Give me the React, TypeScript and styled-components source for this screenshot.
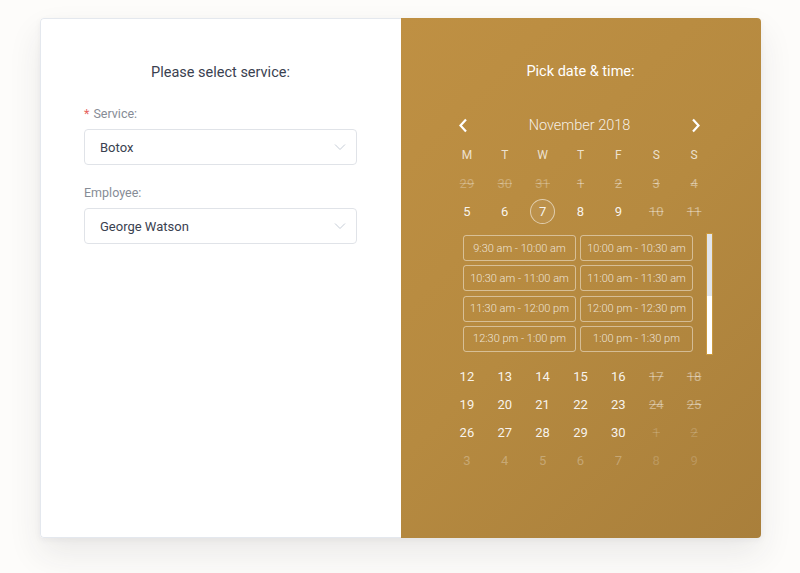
import React from 'react';
import styled, { createGlobalStyle, css } from 'styled-components';

const GlobalStyle = createGlobalStyle`
    html, body {
        margin: 0;
        padding: 0;
        background: #fdfcfa;
        font-family: Roboto, "Open Sans", Arial, sans-serif;
        -webkit-font-smoothing: antialiased;
    }
`;

const Page = styled.div`
    padding: 18px 0 0 40px;
    height: 573px;
    box-sizing: border-box;
`;

const Card = styled.div`
    display: flex;
    width: 721px;
    height: 520px;
    border-radius: 4px;
    overflow: hidden;
    box-shadow: 0 16px 34px rgba(40, 40, 60, 0.09), 0 2px 6px rgba(40, 40, 60, 0.05);
`;

const LeftPanel = styled.div`
    width: 361px;
    box-sizing: border-box;
    padding: 44px 44px 0 43px;
    background: #fff;
    border: 1px solid #e4e8ee;
    border-right: none;
    border-radius: 4px 0 0 4px;
`;

const RightPanel = styled.div`
    flex: 1;
    box-sizing: border-box;
    padding: 44px 48px 0 47px;
    background: linear-gradient(135deg, #bf9043 0%, #b68a40 50%, #a97f3b 100%);
    display: flex;
    flex-direction: column;
`;

const Title = styled.h2<{ light?: boolean }>`
    margin: 0;
    font-size: 14.5px;
    line-height: 20px;
    font-weight: 400;
    text-align: center;
    color: ${({ light }) => (light ? '#fff' : '#3a4150')};
`;

const Field = styled.div`
    margin-top: 23px;
    & + & {
        margin-top: 20px;
    }
`;

const Label = styled.div`
    font-size: 12.5px;
    line-height: 16px;
    color: #868c96;
    margin-bottom: 7px;
`;

const Required = styled.span`
    color: #e6625e;
    margin-right: 4px;
`;

const Select = styled.div`
    height: 36px;
    box-sizing: border-box;
    border: 1px solid #e0e3e8;
    border-radius: 4px;
    display: flex;
    align-items: center;
    justify-content: space-between;
    padding: 0 10px 0 15px;
    font-size: 13px;
    color: #3a4150;
`;

const Chevron = () => (
    <svg width="12" height="8" viewBox="0 0 12 8" fill="none">
        <path d="M1 1.5l5 5 5-5" stroke="#c5ccd6" strokeWidth="1" />
    </svg>
);

const Nav = styled.div`
    margin-top: 29px;
    margin-bottom: 2px;
    height: 28px;
    display: flex;
    align-items: center;
    justify-content: space-between;
    padding: 0 12px 0 10px;
    color: rgba(255, 255, 255, 0.88);
    font-size: 14.5px;
    font-weight: 300;
`;

const Arrow = ({ dir }: { dir: 'left' | 'right' }) => (
    <svg width="10" height="15" viewBox="0 0 10 15" fill="none">
        <path
            d={dir === 'left' ? 'M8 1.5L2.5 7.5 8 13.5' : 'M2 1.5l5.5 6-5.5 6'}
            stroke="#fff"
            strokeWidth="2.2"
        />
    </svg>
);

const Week = styled.div`
    display: grid;
    grid-template-columns: repeat(7, 1fr);
`;

const Cell = styled.div<{ head?: boolean; tone?: number; struck?: boolean }>`
    height: 28px;
    display: flex;
    align-items: center;
    justify-content: center;
    font-size: ${({ head }) => (head ? '12px' : '13px')};
    color: ${({ tone = 0.92 }) => `rgba(255, 255, 255, ${tone})`};
    ${({ struck }) =>
        struck &&
        css`
            text-decoration: line-through;
        `}
`;

const Today = styled.span`
    width: 25px;
    height: 25px;
    box-sizing: border-box;
    border-radius: 50%;
    border: 1px solid rgba(255, 255, 255, 0.55);
    background: rgba(255, 255, 255, 0.06);
    display: flex;
    align-items: center;
    justify-content: center;
`;

const SlotArea = styled.div`
    margin: 8px 0 7px 15px;
    height: 122px;
    display: flex;
    gap: 13px;
`;

const SlotGrid = styled.div`
    padding-top: 2px;
    display: grid;
    grid-template-columns: 113px 113px;
    grid-auto-rows: 26px;
    column-gap: 4px;
    row-gap: 4.3px;
`;

const Slot = styled.div`
    box-sizing: border-box;
    border: 1px solid rgba(255, 255, 255, 0.45);
    border-radius: 3px;
    display: flex;
    align-items: center;
    justify-content: center;
    font-size: 11px;
    font-weight: 300;
    color: rgba(255, 255, 255, 0.78);
    white-space: nowrap;
`;

const Scrollbar = styled.div`
    width: 7px;
    height: 122px;
    box-sizing: border-box;
    border: 1px solid #c9993f;
    background: #fff;
    display: flex;
    flex-direction: column;
`;

const Thumb = styled.div`
    height: 62px;
    background: #e1e5ec;
`;

type Day = { n: number | string; tone?: number; struck?: boolean; today?: boolean };

const heads = ['M', 'T', 'W', 'T', 'F', 'S', 'S'];

const topRows: Day[][] = [
    [
        { n: 29, tone: 0.28, struck: true },
        { n: 30, tone: 0.28, struck: true },
        { n: 31, tone: 0.28, struck: true },
        { n: 1, tone: 0.42, struck: true },
        { n: 2, tone: 0.42, struck: true },
        { n: 3, tone: 0.42, struck: true },
        { n: 4, tone: 0.42, struck: true },
    ],
    [
        { n: 5 },
        { n: 6 },
        { n: 7, today: true },
        { n: 8 },
        { n: 9 },
        { n: 10, tone: 0.42, struck: true },
        { n: 11, tone: 0.42, struck: true },
    ],
];

const bottomRows: Day[][] = [
    [
        { n: 12 },
        { n: 13 },
        { n: 14 },
        { n: 15 },
        { n: 16 },
        { n: 17, tone: 0.42, struck: true },
        { n: 18, tone: 0.42, struck: true },
    ],
    [
        { n: 19 },
        { n: 20 },
        { n: 21 },
        { n: 22 },
        { n: 23 },
        { n: 24, tone: 0.42, struck: true },
        { n: 25, tone: 0.42, struck: true },
    ],
    [
        { n: 26 },
        { n: 27 },
        { n: 28 },
        { n: 29 },
        { n: 30 },
        { n: 1, tone: 0.18, struck: true },
        { n: 2, tone: 0.18, struck: true },
    ],
    [
        { n: 3, tone: 0.28 },
        { n: 4, tone: 0.28 },
        { n: 5, tone: 0.28 },
        { n: 6, tone: 0.28 },
        { n: 7, tone: 0.28 },
        { n: 8, tone: 0.18 },
        { n: 9, tone: 0.18 },
    ],
];

const slots = [
    '9:30 am - 10:00 am',
    '10:00 am - 10:30 am',
    '10:30 am - 11:00 am',
    '11:00 am - 11:30 am',
    '11:30 am - 12:00 pm',
    '12:00 pm - 12:30 pm',
    '12:30 pm - 1:00 pm',
    '1:00 pm - 1:30 pm',
];

const renderRows = (rows: Day[][]) =>
    rows.map((row, i) => (
        <Week key={i}>
            {row.map((d, j) => (
                <Cell key={j} tone={d.tone} struck={d.struck}>
                    {d.today ? <Today>{d.n}</Today> : d.n}
                </Cell>
            ))}
        </Week>
    ));

const App: React.FunctionComponent = () => (
    <Page>
        <GlobalStyle />
        <Card>
            <LeftPanel>
                <Title>Please select service:</Title>
                <Field>
                    <Label>
                        <Required>*</Required>Service:
                    </Label>
                    <Select>
                        Botox
                        <Chevron />
                    </Select>
                </Field>
                <Field>
                    <Label>Employee:</Label>
                    <Select>
                        George Watson
                        <Chevron />
                    </Select>
                </Field>
            </LeftPanel>
            <RightPanel>
                <Title light>Pick date &amp; time:</Title>
                <Nav>
                    <Arrow dir="left" />
                    November 2018
                    <Arrow dir="right" />
                </Nav>
                <Week>
                    {heads.map((h, i) => (
                        <Cell key={i} head tone={0.75}>
                            {h}
                        </Cell>
                    ))}
                </Week>
                {renderRows(topRows)}
                <SlotArea>
                    <SlotGrid>
                        {slots.map((s) => (
                            <Slot key={s}>{s}</Slot>
                        ))}
                    </SlotGrid>
                    <Scrollbar>
                        <Thumb />
                    </Scrollbar>
                </SlotArea>
                {renderRows(bottomRows)}
            </RightPanel>
        </Card>
    </Page>
);

export default App;
